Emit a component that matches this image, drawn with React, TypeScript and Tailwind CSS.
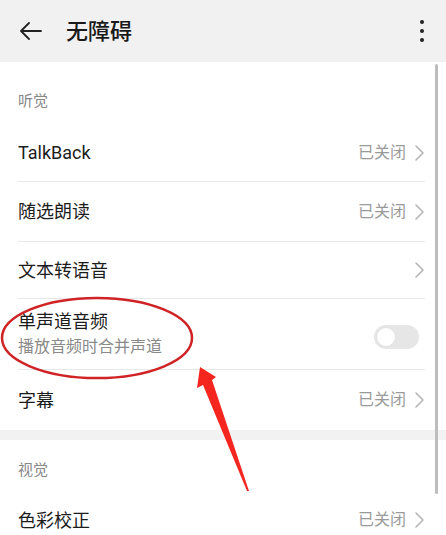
import React from 'react';

const FONT = { fontFamily: 'Roboto, "Noto Sans CJK SC", "Noto Sans", sans-serif' };

const Chevron = () => (
  <svg width="11" height="18" viewBox="0 0 11 18" fill="none" className="ml-[8px]">
    <path d="M2 2l7 7-7 7" stroke="#b3b3b3" strokeWidth="1.5" strokeLinecap="round" strokeLinejoin="round" />
  </svg>
);

const Row: React.FC<{ title: string; status?: string; last?: boolean; h?: string }> = ({ title, status, last, h = 'h-[59px]' }) => (
  <div className={`flex items-center justify-between ${h} ${last ? '' : 'border-b border-[#e8e8e8]'}`}>
    <span className="text-[18px] text-[#1c1c1c]">{title}</span>
    <div className="flex items-center">
      {status && <span className="text-[16px] text-[#9a9a9a]">{status}</span>}
      <Chevron />
    </div>
  </div>
);

export default function App() {
  return (
    <div className="relative w-[446px] h-[535px] overflow-hidden bg-white" style={FONT}>
      {/* Header */}
      <div className="flex items-center justify-between h-[62px] bg-[#f1f1f1] pl-[19px] pr-[22px]">
        <div className="flex items-center">
          <svg width="24" height="20" viewBox="0 0 24 20" fill="none">
            <path d="M22 10H3M10 2L2 10l8 8" stroke="#222" strokeWidth="1.8" strokeLinecap="round" strokeLinejoin="round" />
          </svg>
          <span className="ml-[23px] text-[22px] font-medium text-[#1a1a1a]">无障碍</span>
        </div>
        <div className="flex flex-col gap-[5px] items-center">
          <span className="w-[4px] h-[4px] rounded-full bg-[#222]" />
          <span className="w-[4px] h-[4px] rounded-full bg-[#222]" />
          <span className="w-[4px] h-[4px] rounded-full bg-[#222]" />
        </div>
      </div>

      {/* 听觉 */}
      <div className="pl-[18px] pr-[21px]">
        <div className="h-[62px] flex items-center pt-[16px]">
          <span className="text-[15px] text-[#888]">听觉</span>
        </div>
        <Row title="TalkBack" status="已关闭" h="h-[58px]" />
        <Row title="随选朗读" status="已关闭" h="h-[60px]" />
        <Row title="文本转语音" h="h-[57px]" />
        <div className="flex items-center justify-between h-[71px] border-b border-[#e8e8e8]">
          <div className="flex flex-col">
            <span className="text-[18px] text-[#1c1c1c] leading-[26px]">单声道音频</span>
            <span className="text-[16px] text-[#8a8a8a] leading-[24px]">播放音频时合并声道</span>
          </div>
          <div className="w-[45px] h-[24px] rounded-full bg-[#e6e6e6] flex items-center p-[2px] mt-[6px] mr-[6px]">
            <span className="w-[20px] h-[20px] rounded-full bg-white border border-[#e0e0e0]" />
          </div>
        </div>
        <Row title="字幕" status="已关闭" last h="h-[60px]" />
      </div>

      <div className="h-[10px] bg-[#f2f2f2]" />

      {/* 视觉 */}
      <div className="pl-[18px] pr-[21px]">
        <div className="h-[55px] flex items-center pt-[6px]">
          <span className="text-[15px] text-[#888]">视觉</span>
        </div>
        <Row title="色彩校正" status="已关闭" last h="h-[50px]" />
      </div>

      {/* Scrollbar */}
      <div className="absolute right-[8px] top-[64px] w-[3px] h-[430px] rounded-full bg-[#bdbdbd]" />

      {/* Annotation */}
      <svg className="absolute inset-0 pointer-events-none" width="446" height="535" viewBox="0 0 446 535">
        <ellipse cx="97" cy="338" rx="95" ry="40" fill="none" stroke="#cf2326" strokeWidth="2.5" />
        <polygon points="200,367 216,377 212,380 249,491 247,491 203,385 197,388" fill="#f5261e" />
      </svg>
    </div>
  );
}
